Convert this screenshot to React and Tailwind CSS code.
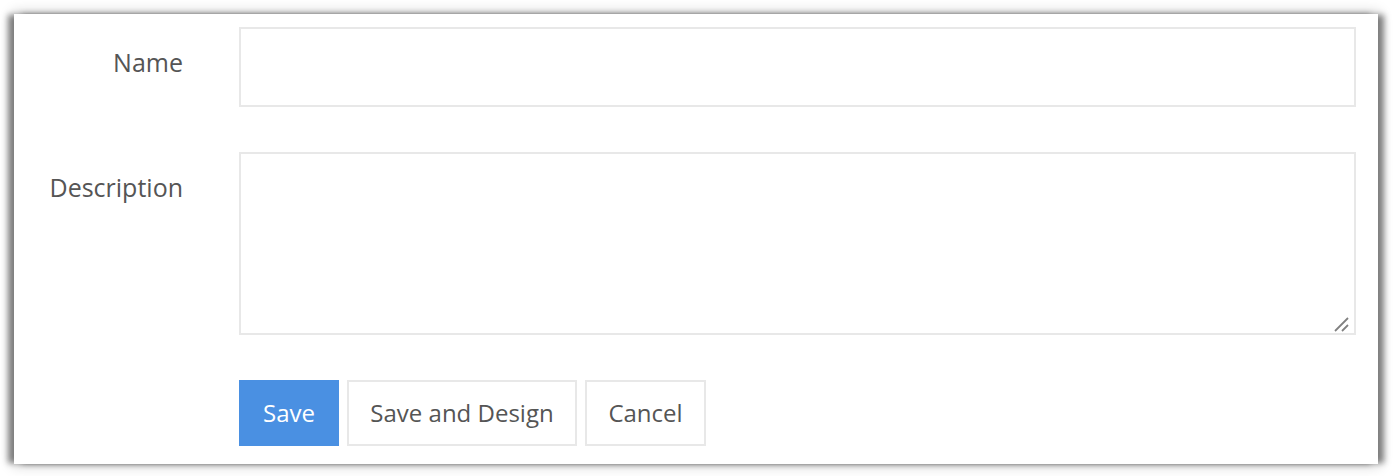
import React from "react";

export default function App() {
  return (
    <div className="w-[1395px] h-[476px] bg-white pt-[14px] pl-[14px]" style={{ fontFamily: '"Open Sans", sans-serif' }}>
      <div className="w-[1364px] h-[450px] bg-white shadow-[-7px_0_6px_-1px_rgba(0,0,0,0.45),7px_0_6px_-1px_rgba(0,0,0,0.45),0_0_12px_2px_rgba(0,0,0,0.18)] pt-[13px] pl-[33px]">
        <div className="flex flex-col gap-[45px]">
          <div className="flex">
            <label className="w-[136px] text-right pt-[19px] text-[25px] leading-[32px] text-[#555] whitespace-nowrap">Name</label>
            <input className="ml-[56px] w-[1117px] h-[80px] border-2 border-[#e8e8e8] outline-none px-3 text-[22px]" />
          </div>
          <div className="flex">
            <label className="w-[136px] text-right pt-[19px] text-[25px] leading-[32px] text-[#555] whitespace-nowrap">Description</label>
            <div className="relative ml-[56px] w-[1117px] h-[183px]">
              <textarea className="w-full h-full border-2 border-[#e8e8e8] outline-none px-3 text-[22px] resize-none block" />
              <svg className="absolute left-[1095px] top-[164px] pointer-events-none" width="16" height="16" viewBox="0 0 16 16">
                <line x1="1" y1="15" x2="14" y2="2" stroke="#808080" strokeWidth="1.8" />
                <line x1="8" y1="15" x2="14" y2="9" stroke="#808080" strokeWidth="1.8" />
              </svg>
            </div>
          </div>
          <div className="flex gap-[8px] ml-[192px]">
            <button className="w-[100px] h-[66px] bg-[#4a90e2] text-white text-[24px]">Save</button>
            <button className="w-[230px] h-[66px] border-2 border-[#e8e8e8] text-[#555] text-[24px]">Save and Design</button>
            <button className="w-[121px] h-[66px] border-2 border-[#e8e8e8] text-[#555] text-[24px]">Cancel</button>
          </div>
        </div>
      </div>
    </div>
  );
}
